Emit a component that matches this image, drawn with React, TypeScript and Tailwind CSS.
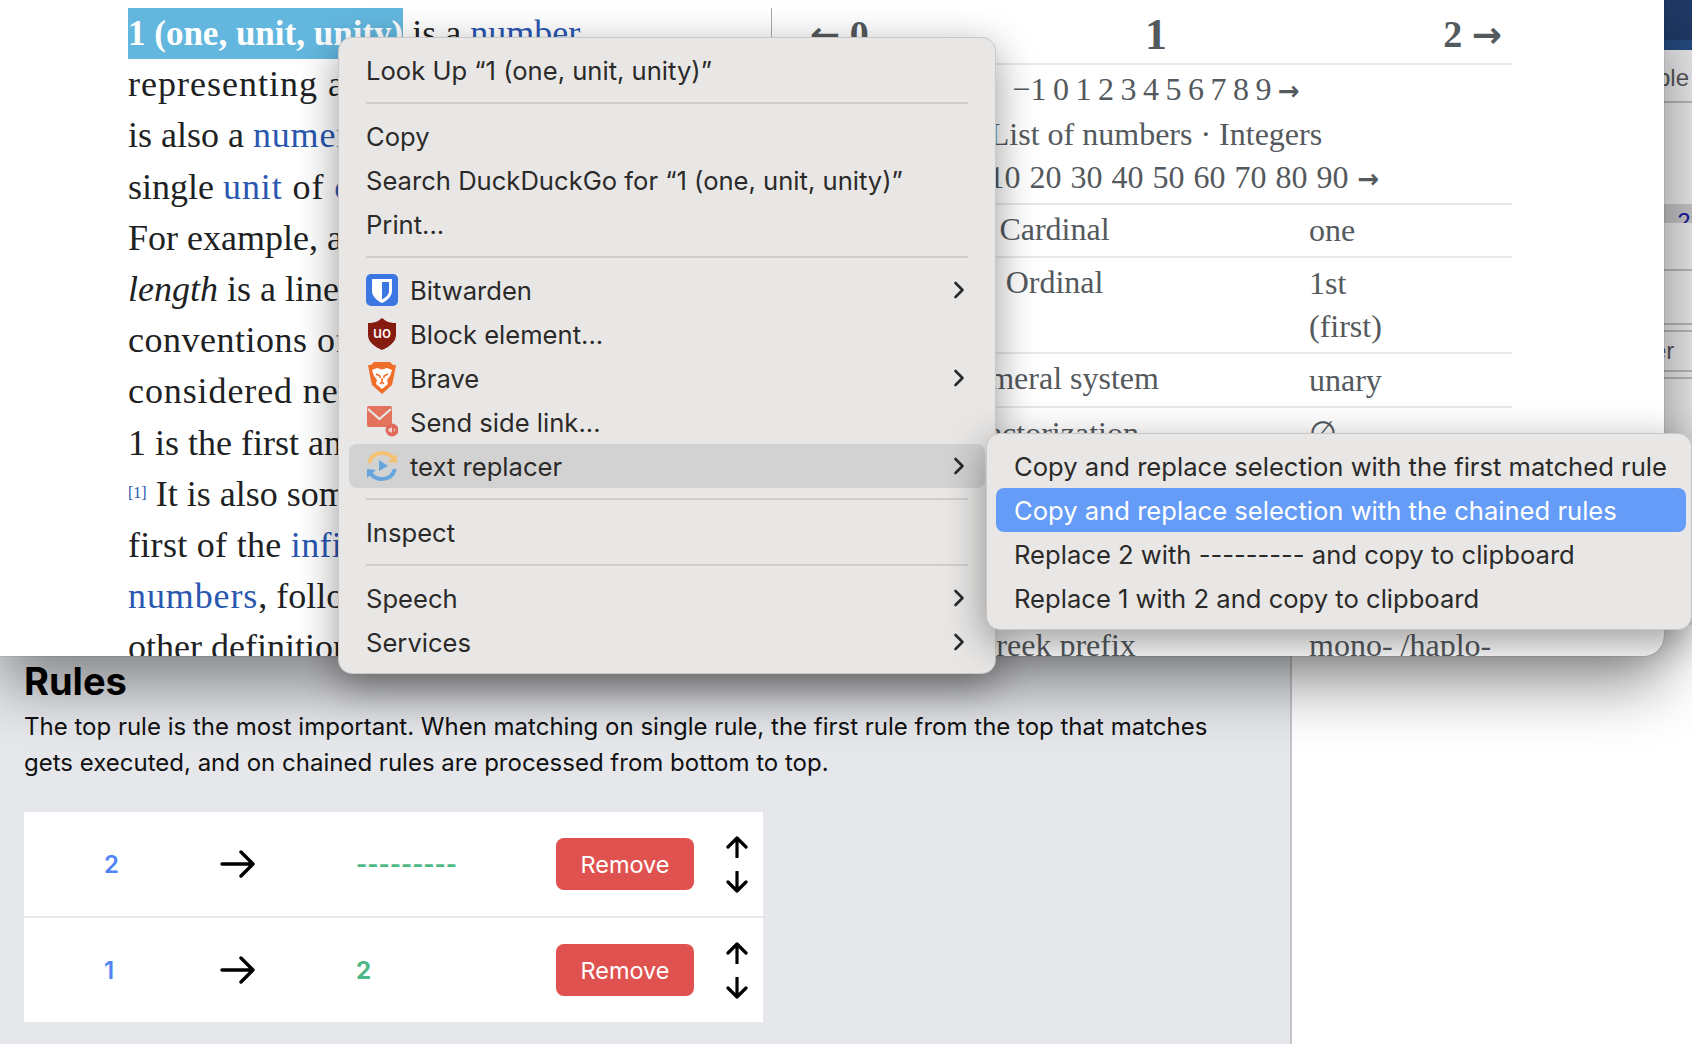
const serif = "font-['Liberation_Serif',serif]";
const arrowFont = "font-['DejaVu_Sans',sans-serif]";

const articleLines = [
  <>is also a <a className="tracking-[0.8px] text-[#2a57b0]">numeral</a></>,
  <>single <span className="tracking-[0.9px]"><a className="text-[#2a57b0]">unit</a> of <a className="text-[#2a57b0]">counting</a></span></>,
  <>For example, a</>,
  <><i>length</i> is a line</>,
  <span className="tracking-[0.5px]">conventions of</span>,
  <span className="tracking-[0.9px]">considered neither</span>,
  <>1 is the first and</>,
  <><sup className="text-[16px] text-[#2a57b0]">[1]</sup> It is also sometimes</>,
  <span className="tracking-[0.3px]">first of the <a className="text-[#2a57b0]">infinite</a></span>,
  <><a className="tracking-[0.9px] text-[#2a57b0]">numbers</a>, followed</>,
  <>other definitions</>,
];

const infoRows = [
  { label: "Factorization", value: "∅" },
  { label: "Divisors", value: "1" },
  { label: "Greek numeral", value: "Αʹ" },
  { label: "Roman numeral", value: "I, i" },
  { label: "Greek prefix", value: "mono- /haplo-" },
];

function Chevron() {
  return (
    <svg width="12" height="18" viewBox="0 0 12 18" fill="none" className="ml-auto">
      <path d="M2.5 2 L9.5 9 L2.5 16" stroke="#2b2a29" strokeWidth="2.6" strokeLinecap="round" strokeLinejoin="round" />
    </svg>
  );
}

function BitwardenIcon() {
  return (
    <svg width="32" height="32" viewBox="0 0 32 32">
      <rect width="32" height="32" rx="5" fill="#3c76e2" />
      <path d="M6 5 H26 V17 C26 23 20 27 16 29 C12 27 6 23 6 17 Z" fill="#fff" />
      <path d="M16 8 H23 V17 C23 21 19 24 16 25.5 Z" fill="#3c76e2" />
    </svg>
  );
}

function UblockIcon() {
  return (
    <svg width="32" height="32" viewBox="0 0 32 32">
      <path d="M16 0 L20 3 C23 4.5 26 5 30 5 V17 C30 24 23 29 16 32 C9 29 2 24 2 17 V5 C6 5 9 4.5 12 3 Z" fill="#861c10" />
      <text x="16" y="20" textAnchor="middle" fontSize="15" fontWeight="500" fill="#fff" fontFamily="Inter, sans-serif">uo</text>
    </svg>
  );
}

function BraveIcon() {
  return (
    <svg width="32" height="32" viewBox="0 0 32 32">
      <path d="M8 0 H24 L27 3 L30 3 L28 14 L26 23 L16 32 L6 23 L4 14 L2 3 L5 3 Z" fill="#ef6f2a" />
      <path d="M6 8 L11 6 L16 7.5 L21 6 L26 8 L24 14 L21 18 L22 22 L16 27 L10 22 L11 18 L8 14 Z" fill="#fff" />
      <path d="M10 12 L14 14 L14 16 M22 12 L18 14 L18 16 M14 22 L16 20 L18 22 M16 16 V20" stroke="#ef6f2a" strokeWidth="1.6" fill="none" />
    </svg>
  );
}

function SendIcon() {
  return (
    <svg width="32" height="32" viewBox="0 0 32 32">
      <rect x="1" y="0" width="25" height="21" rx="2" fill="#e4735e" />
      <path d="M2 3 L13.5 13 L25 3" stroke="#e8e7e6" strokeWidth="2.2" fill="none" />
      <circle cx="26" cy="24" r="6.5" fill="#df6a5c" />
      <path d="M22.5 22.5 V25.5 H24 L26 27 V21 L24 22.5 Z" fill="#f6d8d2" />
      <path d="M28 22.5 C29 23.5 29 24.5 28 25.5" stroke="#f6d8d2" strokeWidth="1" fill="none" />
    </svg>
  );
}

function ReplacerIcon() {
  return (
    <svg width="32" height="32" viewBox="0 0 32 32" fill="none">
      <path d="M3 13 C5 6 10 3 16 3 C21 3 25 5 28 9" stroke="#f3c274" strokeWidth="4" />
      <path d="M31 4 L31 13 L22 12 Z" fill="#f3c274" />
      <path d="M29 19 C27 26 22 29 16 29 C11 29 7 27 4 23" stroke="#68a5dc" strokeWidth="4" />
      <path d="M1 28 L1 19 L10 20 Z" fill="#68a5dc" />
      <path d="M13 10 L22 16 L13 21 Z" fill="#68a5dc" />
    </svg>
  );
}

function MenuRow({ text, icon, arrow, active }: { text: string; icon?: React.ReactNode; arrow?: boolean; active?: boolean }) {
  return (
    <div className={`flex h-[44px] items-center rounded-[8px] pl-[17px] pr-[20px] ${active ? "bg-[#d2d2d2]" : ""}`}>
      {icon && <span className="mr-[12px] flex h-[32px] w-[32px] items-center justify-center">{icon}</span>}
      <span className="pt-[2px]">{text}</span>
      {arrow && <Chevron />}
    </div>
  );
}

function Sep() {
  return <div className="mx-[17px] my-[10px] h-[2px] bg-[#cfcecd]" />;
}

function ArrowRight() {
  return (
    <svg width="36" height="28" viewBox="0 0 36 28" fill="none">
      <path d="M2 14 H33 M21 2 L33 14 L21 26" stroke="#000" strokeWidth="3.4" strokeLinecap="round" strokeLinejoin="round" />
    </svg>
  );
}

function ArrowUp() {
  return (
    <svg width="22" height="22" viewBox="0 0 22 22" fill="none">
      <path d="M11 21 V2 M2 11 L11 2 L20 11" stroke="#000" strokeWidth="3.2" strokeLinecap="round" strokeLinejoin="round" />
    </svg>
  );
}

function ArrowDown() {
  return (
    <svg width="22" height="22" viewBox="0 0 22 22" fill="none">
      <path d="M11 1 V20 M2 11 L11 20 L20 11" stroke="#000" strokeWidth="3.2" strokeLinecap="round" strokeLinejoin="round" />
    </svg>
  );
}

function RuleRow({ from, to }: { from: string; to: string }) {
  return (
    <div className="grid h-[104px] grid-cols-[196px_136px_200px_170px_37px] items-center bg-white">
      <span className="pl-[80px] pt-[2px] text-[24px] font-semibold text-[#4f83f6]">{from}</span>
      <ArrowRight />
      <span className="pt-[2px] text-[24px] font-bold text-[#4fb887]">{to}</span>
      <button className="h-[52px] w-[138px] rounded-[8px] bg-[#e0524f] pt-[2px] text-[23.5px] text-white">Remove</button>
      <div className="flex flex-col gap-[13px]">
        <ArrowUp />
        <ArrowDown />
      </div>
    </div>
  );
}

export default function App() {
  return (
    <div className="relative h-[1044px] w-[1692px] overflow-hidden bg-white font-['Inter',sans-serif]">
      {/* page behind the browser window */}
      <div className="flex h-full">
        <div className="w-[1292px] border-r-2 border-r-[#c4c6cb] bg-[#e5e7eb] pl-[24px] pt-[659px]">
          <h1 className="text-[38px] font-bold leading-[44px] text-black">Rules</h1>
          <p className="mt-[6px] w-[1200px] text-[24px] leading-[36px] text-[#111]">
            The top rule is the most important. When matching on single rule, the first rule from the top that matches gets executed, and on chained rules are processed from bottom to top.
          </p>
          <div className="mt-[31px] flex w-[739px] flex-col gap-[2px]">
            <RuleRow from="2" to="---------" />
            <RuleRow from="1" to="2" />
          </div>
        </div>
        <div className="flex flex-1 justify-end">
          <div className="flex h-[625px] w-[28px] flex-col overflow-hidden bg-[#e8e8ea] font-['Liberation_Sans',sans-serif] text-[24px] text-[#555]">
            <div className="h-[40px] shrink-0 bg-[#1f3a66]" />
            <div className="h-[10px] shrink-0 bg-[#25497f]" />
            <div className="flex h-[53px] shrink-0 items-center border-b-2 border-b-[#b5b5b7] pt-[4px] whitespace-nowrap"><span className="-ml-[7px]">ble</span></div>
            <div className="h-[101px] shrink-0" />
            <div className="h-[19px] shrink-0 overflow-hidden whitespace-nowrap bg-[#c4c4c6] text-[#1a1a9a] underline">_2</div>
            <div className="h-[48px] shrink-0 border-b-2 border-b-[#b5b5b7]" />
            <div className="h-[54px] shrink-0 border-b-2 border-b-[#b5b5b7]" />
            <div className="h-[7px] shrink-0 border-b-2 border-b-[#b5b5b7]" />
            <div className="flex h-[40px] shrink-0 items-center border-b-2 border-b-[#b5b5b7] whitespace-nowrap"><span className="-ml-[11px]">er</span></div>
            <div className="h-[7px] shrink-0 border-b-2 border-b-[#b5b5b7]" />
          </div>
        </div>
      </div>

      {/* browser window */}
      <div className={`absolute left-0 top-0 flex h-[656px] w-[1664px] overflow-hidden rounded-br-[20px] bg-white shadow-[0_0_1px_rgba(0,0,0,0.6),0_30px_60px_rgba(0,0,0,0.42)] ${serif} text-[36px] leading-[51.2px] text-[#202122]`}>
        <div className="w-[771px] shrink-0 whitespace-nowrap pl-[128px] pt-[8px]">
          <div>
            <span className="inline-block h-[51px] bg-[#63b7de] text-[35px] font-bold text-white">1 (one, unit, unity)</span>{" "}
            <span>is a <a className="text-[#2a57b0]">number</a></span>
          </div>
          <div className="tracking-[1px]">representing a single</div>
          {articleLines.map((line, i) => (
            <div key={i}>{line}</div>
          ))}
        </div>
        <div className="mt-[8px] h-[29px] w-px shrink-0 bg-[#a2a9b1]" />
        <div className="ml-[28px] w-[712px] shrink-0 self-start text-[32px] leading-[43px] text-[#54595d]">
          <div className="flex h-[65px] items-center justify-between border-b-2 border-b-[#e8e8e8] px-[10px] pt-[6px] font-bold">
            <span className="text-[38px]"><span className={`${arrowFont} text-[36px]`}>←</span> 0</span>
            <span className="text-[44px]">1</span>
            <span className="text-[38px]">2 <span className={`${arrowFont} text-[36px]`}>→</span></span>
          </div>
          <div className="flex h-[140px] flex-col justify-center border-b-2 border-b-[#e8e8e8] text-center">
            <div className="[word-spacing:-1.5px]">−1 0 1 2 3 4 5 6 7 8 9 <span className={`${arrowFont} text-[26px] font-bold`}>→</span></div>
            <div>List of numbers · Integers</div>
            <div className="[word-spacing:1px]"><span className={`${arrowFont} text-[26px] font-bold`}>←</span> 0 10 20 30 40 50 60 70 80 90 <span className={`${arrowFont} text-[26px] font-bold`}>→</span></div>
          </div>
          <div className="grid h-[53px] grid-cols-[509px_203px] items-center border-b-2 border-b-[#e8e8e8]">
            <span className="pb-[3px] text-center">Cardinal</span>
            <span>one</span>
          </div>
          <div className="grid h-[96px] grid-cols-[509px_203px] border-b-2 border-b-[#e8e8e8] pt-[4px]">
            <span className="-mt-[1px] text-center">Ordinal</span>
            <span>1st<br />(first)</span>
          </div>
          <div className="grid h-[54px] grid-cols-[509px_203px] items-center border-b-2 border-b-[#e8e8e8]">
            <span className="pb-[3px] text-center">Numeral system</span>
            <span>unary</span>
          </div>
          {infoRows.map((row) => (
            <div key={row.label} className="grid h-[53px] grid-cols-[509px_203px] items-center border-b-2 border-b-[#e8e8e8]">
              <span className="text-center">{row.label}</span>
              <span className="whitespace-nowrap">{row.value}</span>
            </div>
          ))}
        </div>
      </div>

      {/* context menu */}
      <div className="absolute left-[338px] top-[37px] w-[658px] rounded-[14px] border border-[#c9c8c7] bg-[#e8e7e6] px-[10px] pb-[9px] pt-[10px] text-[25.6px] text-[#2b2a29] shadow-[0_12px_40px_rgba(0,0,0,0.4)]">
        <MenuRow text="Look Up “1 (one, unit, unity)”" />
        <Sep />
        <MenuRow text="Copy" />
        <MenuRow text="Search DuckDuckGo for “1 (one, unit, unity)”" />
        <MenuRow text="Print..." />
        <Sep />
        <MenuRow text="Bitwarden" icon={<BitwardenIcon />} arrow />
        <MenuRow text="Block element..." icon={<UblockIcon />} />
        <MenuRow text="Brave" icon={<BraveIcon />} arrow />
        <MenuRow text="Send side link..." icon={<SendIcon />} />
        <MenuRow text="text replacer" icon={<ReplacerIcon />} arrow active />
        <Sep />
        <MenuRow text="Inspect" />
        <Sep />
        <MenuRow text="Speech" arrow />
        <MenuRow text="Services" arrow />
      </div>

      {/* submenu */}
      <div className="absolute left-[986px] top-[433px] w-[706px] rounded-[14px] border border-[#c9c8c7] bg-[#e8e7e6] pb-[9px] pl-[9px] pr-[5px] pt-[10px] text-[25.6px] text-[#2b2a29] shadow-[0_12px_40px_rgba(0,0,0,0.4)]">
        <div className="flex h-[44px] items-center pl-[18px] pt-[2px]">Copy and replace selection with the first matched rule</div>
        <div className="flex h-[44px] items-center rounded-[8px] bg-[#659cf8] pl-[18px] pt-[2px] text-white">Copy and replace selection with the chained rules</div>
        <div className="flex h-[44px] items-center pl-[18px] pt-[2px]">Replace 2 with --------- and copy to clipboard</div>
        <div className="flex h-[44px] items-center pl-[18px] pt-[2px]">Replace 1 with 2 and copy to clipboard</div>
      </div>
    </div>
  );
}
